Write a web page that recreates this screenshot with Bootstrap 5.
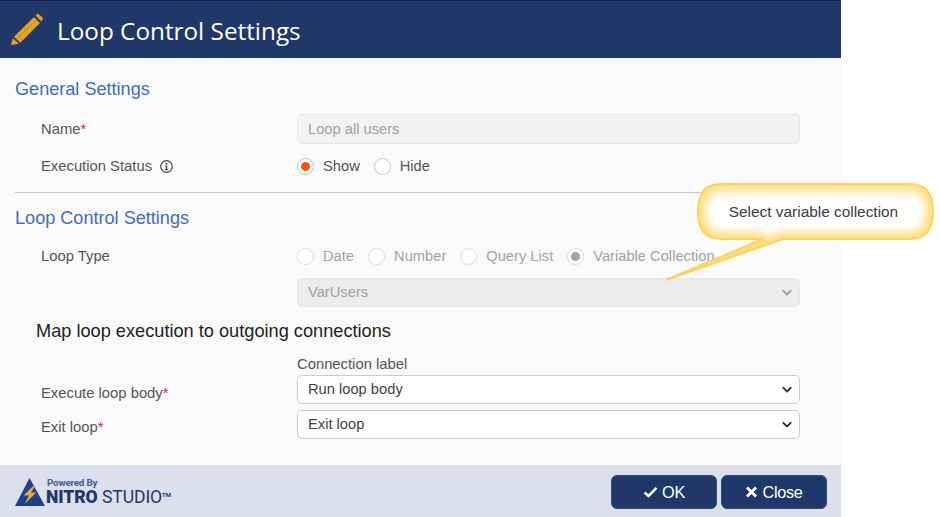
<!DOCTYPE html>
<html lang="en">
<head>
<meta charset="utf-8">
<title>Loop Control Settings</title>
<link href="https://cdn.jsdelivr.net/npm/bootstrap@5.3.0/dist/css/bootstrap.min.css" rel="stylesheet">
<style>
html,body{height:517px;overflow:hidden;background:#fff;}
body{font-family:"Liberation Sans",Arial,sans-serif;font-size:14.8px;color:#555;position:relative;}
.dlg{width:841px;height:517px;background:#fafafa;}
.dlg-head{height:58px;background:#1f3769;color:#fff;padding-left:11px;border-top:1px solid #15233f;}
.dlg-head .ttl{font-family:"Open Sans",sans-serif;font-size:24.3px;margin:4px 0 0 14px;font-weight:400;line-height:1;color:#fff;}
.dlg-main{padding:20px 41px 0 15px;}
.sect{font-size:18.1px;font-weight:400;color:#3f6cc4;line-height:22px;margin:0;}
.frow{padding-left:26px;}
.flab{width:256px;flex:none;font-size:14.8px;color:#555;}
.lab-low1{padding-top:8px;}
.lab-low2{padding-top:6px;}
.req{color:#e8202a;}
.fctl{flex:1;min-width:0;}
.fld{height:29px;min-height:0;font-size:14.7px;padding:0 10px;border-radius:5px;border:1px solid #ccc;color:#444;background-color:#fff;box-shadow:none;}
.fld-in{height:30px;}
select.fld{background-position:right 5px center;background-size:14px 12px;background-image:url("data:image/svg+xml,%3csvg xmlns='http://www.w3.org/2000/svg' viewBox='0 0 16 16'%3e%3cpath fill='none' stroke='%23343a40' stroke-linecap='round' stroke-linejoin='round' stroke-width='2.4' d='m3 5 5 5 5-5'/%3e%3c/svg%3e");}
select.fld:disabled{background-image:url("data:image/svg+xml,%3csvg xmlns='http://www.w3.org/2000/svg' viewBox='0 0 16 16'%3e%3cpath fill='none' stroke='%23a3a3a3' stroke-linecap='round' stroke-linejoin='round' stroke-width='2.4' d='m3 5 5 5 5-5'/%3e%3c/svg%3e");background-color:#ececec;}
.fld:disabled{background-color:#f3f3f3;border-color:#e6e6e6;color:#a0a0a0;opacity:1;}
.r1{height:30px;margin-top:14px;}
.r2{height:20px;margin-top:12px;}
.sep{border:0;border-top:1px solid #c9c3c3;opacity:1;margin:16px 0 14px;}
.r3{height:20px;margin-top:17px;}
.r4{margin-top:12px;height:29px;}
.maph{font-size:18.2px;color:#222;font-weight:400;line-height:22px;margin:13px 0 0 21px;}
.clab{font-size:14.8px;color:#555;line-height:18px;margin-top:13px;}
.r5{height:29px;margin-top:2px;}
.r6{height:29px;margin-top:6px;}
.opts{gap:14px;}
.opt{display:flex;align-items:center;gap:9px;font-size:14.7px;color:#555;margin:0;min-height:0;padding:0;}
.opt .form-check-input{width:17px;height:17px;margin:0;float:none;border:1px solid #c8c8c8;background-color:#fff;}
.opt .form-check-input:checked{background-image:radial-gradient(circle,#f1590a 0 4px,#fff 5px);border-color:#bbb;}
.opt.off{color:#a2a2a2;}
.opt.off .form-check-input{opacity:1;border-color:#ddd;}
.opt.off .form-check-input:checked{background-image:radial-gradient(circle,#b59c95 0 4px,#fff 5px);border-color:#ddd;}
.opt.off label{opacity:1;}
.dlg-foot{height:52px;background:#dbe0ec;padding:2px 14px 0 15px;margin-top:auto;}
.brand{color:#1f3769;line-height:1;margin-left:1px;}
.brand .pw{font-size:9.8px;font-weight:700;color:#3f5a98;font-family:"Roboto",sans-serif;margin-left:1px;letter-spacing:-.2px;}
.brand .nm{font-size:17.6px;font-family:"Roboto",sans-serif;margin-top:1px;letter-spacing:-.1px;}
.brand .nm b{font-weight:900;}
.brand sup{font-size:6px;font-weight:700;top:-.9em;}
.act{width:106px;height:34px;background:#1f3769;border:1px solid #32497b;color:#fff;border-radius:6px;font-size:16.3px;padding:0;letter-spacing:-.3px;}
.act:hover{background:#1f3769;color:#fff;border-color:#32497b;}
.tip{position:absolute;left:660px;top:180px;width:280px;height:105px;}
.tip svg{display:block;}
.tip-text{position:absolute;left:36px;top:4px;width:235px;height:55px;display:flex;align-items:center;justify-content:center;font-size:15.4px;color:#3c3c46;}
</style>
</head>
<body>
<div class="dlg d-flex flex-column">
  <div class="dlg-head d-flex align-items-center">
    <svg width="32" height="32" viewBox="0 0 32 32" aria-hidden="true"><g fill="#e5a227"><path d="M0 31 L1.8 24.3 L8 29.8 Z"/><path d="M3 22.8 L23 3 L29 9 L9.3 28.8 Z"/><path d="M24.6 1.4 L26 .3 Q27 -.2 28 .6 L31.4 3.6 Q32.2 4.6 31.4 5.6 L30.3 7.6 Z"/></g><path d="M6.5 24.5 L25 6" stroke="#1f3769" stroke-width=".5" opacity=".45"/></svg>
    <h1 class="ttl">Loop Control Settings</h1>
  </div>
  <div class="dlg-main">
    <h2 class="sect">General Settings</h2>
    <div class="frow d-flex align-items-center r1">
      <div class="flab">Name<span class="req">*</span></div>
      <div class="fctl"><input class="form-control fld fld-in" disabled value="Loop all users"></div>
    </div>
    <div class="frow d-flex align-items-center r2">
      <div class="flab d-flex align-items-center gap-2">Execution Status
        <svg width="13" height="13" viewBox="0 0 13 13" aria-hidden="true"><circle cx="6.5" cy="6.5" r="5.8" fill="none" stroke="#444" stroke-width="1.2"/><circle cx="6.5" cy="3.7" r="1" fill="#444"/><path d="M5 5.6h2.2v3.6H8.2v1H4.8v-1h1V6.6H5z" fill="#444"/></svg>
      </div>
      <div class="fctl d-flex opts">
        <div class="opt"><input class="form-check-input" type="radio" name="st" id="s1" checked><label for="s1">Show</label></div>
        <div class="opt"><input class="form-check-input" type="radio" name="st" id="s2"><label for="s2">Hide</label></div>
      </div>
    </div>
    <hr class="sep">
    <h2 class="sect">Loop Control Settings</h2>
    <div class="frow d-flex align-items-center r3">
      <div class="flab">Loop Type</div>
      <div class="fctl d-flex opts">
        <div class="opt off"><input class="form-check-input" type="radio" name="lt" id="l1" disabled><label for="l1">Date</label></div>
        <div class="opt off"><input class="form-check-input" type="radio" name="lt" id="l2" disabled><label for="l2">Number</label></div>
        <div class="opt off"><input class="form-check-input" type="radio" name="lt" id="l3" disabled><label for="l3">Query List</label></div>
        <div class="opt off"><input class="form-check-input" type="radio" name="lt" id="l4" disabled checked><label for="l4">Variable Collection</label></div>
      </div>
    </div>
    <div class="frow d-flex align-items-center r4">
      <div class="flab"></div>
      <div class="fctl"><select class="form-select fld" disabled><option>VarUsers</option></select></div>
    </div>
    <h3 class="maph">Map loop execution to outgoing connections</h3>
    <div class="frow d-flex"><div class="flab"></div><div class="fctl clab">Connection label</div></div>
    <div class="frow d-flex align-items-center r5">
      <div class="flab lab-low1">Execute loop body<span class="req">*</span></div>
      <div class="fctl"><select class="form-select fld"><option>Run loop body</option></select></div>
    </div>
    <div class="frow d-flex align-items-center r6">
      <div class="flab lab-low2">Exit loop<span class="req">*</span></div>
      <div class="fctl"><select class="form-select fld"><option>Exit loop</option></select></div>
    </div>
  </div>
  <div class="dlg-foot d-flex align-items-center justify-content-between">
    <div class="d-flex align-items-center">
      <svg width="30" height="29" viewBox="0 0 31 30" aria-hidden="true"><path d="M15 0 L31 29 L0 29 Z" fill="#1f3f8f"/><path d="M19 8 L9 18 L14.5 18 L10 27 L22 15 L16.5 15 L21 8 Z" fill="#f0a92a"/></svg>
      <div class="brand">
        <div class="pw">Powered By</div>
        <div class="nm"><b>NITRO</b> STUDIO<sup>TM</sup></div>
      </div>
    </div>
    <div class="d-flex gap-1">
      <button class="btn act d-inline-flex align-items-center justify-content-center gap-1" type="button">
        <svg width="15" height="12" viewBox="0 0 15 12" aria-hidden="true"><path d="M1.5 6.5 L5.5 10 L13.5 1.8" fill="none" stroke="#fff" stroke-width="2.6"/></svg>OK</button>
      <button class="btn act d-inline-flex align-items-center justify-content-center gap-1" type="button">
        <svg width="13" height="12" viewBox="0 0 13 12" aria-hidden="true"><path d="M2 1.5 L11 10.5 M11 1.5 L2 10.5" fill="none" stroke="#fff" stroke-width="2.8"/></svg>Close</button>
    </div>
  </div>
</div>
<div class="tip">
  <svg width="280" height="105" viewBox="0 0 280 105" aria-hidden="true">
    <defs>
      <path id="bub" d="M63 4 H248 C264 4 273 10 273 31.5 C273 53 264 59 248 59 H123 L6 100 L103 59 H63 C47 59 38 53 38 31.5 C38 10 47 4 63 4 Z"/>
      <clipPath id="bc"><use href="#bub"/></clipPath>
      <filter id="bl" x="-20%" y="-40%" width="140%" height="180%"><feGaussianBlur stdDeviation="5"/></filter>
    </defs>
    <use href="#bub" fill="#fff"/>
    <g clip-path="url(#bc)"><use href="#bub" fill="none" stroke="#ffdc78" stroke-width="14" filter="url(#bl)"/></g>
    <use href="#bub" fill="none" stroke="#fdd25e" stroke-width="2"/>
  </svg>
  <div class="tip-text">Select variable collection</div>
</div>
<script src="https://cdn.jsdelivr.net/npm/bootstrap@5.3.0/dist/js/bootstrap.bundle.min.js"></script>
</body>
</html>
